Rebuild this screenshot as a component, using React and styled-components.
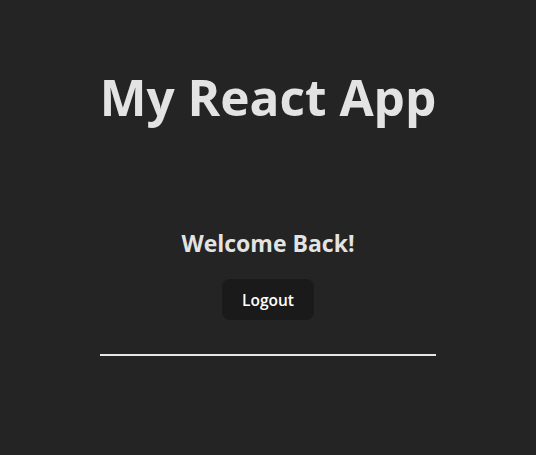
import React from "react";
import styled, { createGlobalStyle } from "styled-components";

const Global = createGlobalStyle`
  html, body { margin: 0; padding: 0; }
  body {
    background: #242424;
    color: rgba(255, 255, 255, 0.87);
    font-family: "Open Sans", "Noto Sans", sans-serif;
    min-height: 455px;
  }
`;

const Page = styled.div`
  display: flex;
  flex-direction: column;
  align-items: center;
  padding-top: 70px;
`;

const Title = styled.h1`
  margin: 0;
  font-size: 49.6px;
  line-height: 1.1;
  font-weight: 700;
  color: #e3e3e3;
`;

const Welcome = styled.h2`
  margin: 104px 0 0;
  font-size: 23px;
  line-height: 1.3;
  font-weight: 700;
  color: #e3e3e3;
`;

const Button = styled.button`
  margin-top: 21px;
  width: 92px;
  height: 41px;
  border-radius: 8px;
  border: 1px solid transparent;
  background: #1a1a1a;
  color: #ffffff;
  font-family: inherit;
  font-size: 15.5px;
  font-weight: 600;
  cursor: pointer;
`;

const Divider = styled.div`
  margin-top: 34px;
  width: 336px;
  height: 2px;
  background: #e6e6e6;
`;

export default function App() {
  return (
    <>
      <Global />
      <Page>
        <Title>My React App</Title>
        <Welcome>Welcome Back!</Welcome>
        <Button>Logout</Button>
        <Divider />
      </Page>
    </>
  );
}
